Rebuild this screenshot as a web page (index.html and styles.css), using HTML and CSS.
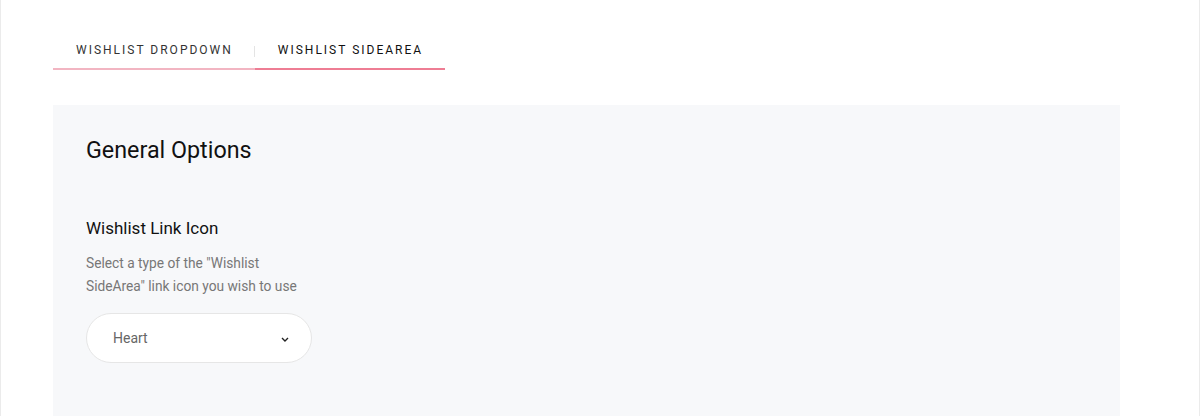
FILE: index.html
```html
<!DOCTYPE html>
<html lang="en">
<head>
  <meta charset="UTF-8" />
  <title>Wishlist Options</title>
  <link rel="stylesheet" href="styles.css">
</head>
<body>
  <div class="page">
    <div class="tabs">
      <a class="tab" href="#">Wishlist Dropdown</a>
      <a class="tab active" href="#">Wishlist SideArea</a>
    </div>

    <div class="panel">
      <h2 class="panel-title">General Options</h2>

      <div class="field">
        <h3 class="field-title">Wishlist Link Icon</h3>
        <p class="field-desc">Select a type of the "Wishlist SideArea" link icon you wish to use</p>
        <div class="select">
          <span>Heart</span>
          <svg class="chevron" width="8" height="5" viewBox="0 0 8 5">
            <path d="M1 1l3 3 3-3" fill="none" stroke="#222" stroke-width="1.4"/>
          </svg>
        </div>
      </div>
    </div>
  </div>
</body>
</html>
```

FILE: styles.css
```css
html, body {
  margin: 0;
  height: 100%;
}

body {
  font-family: Roboto, "Noto Sans", Arial, sans-serif;
  background: #fff;
  color: #111;
}

.page {
  box-sizing: border-box;
  height: 100%;
  border-left: 1px solid #ebebeb;
  border-right: 1px solid #ebebeb;
  padding: 42px 0 0 52px;
  overflow: hidden;
}

.tabs {
  display: flex;
  align-items: flex-end;
}

.tab {
  position: relative;
  display: block;
  padding: 0 22px 9px 23px;
  font-size: 12px;
  line-height: 17px;
  letter-spacing: 2px;
  text-transform: uppercase;
  text-decoration: none;
  color: #333;
  border-bottom: 2px solid #f2b5c2;
}

.tab + .tab::before {
  content: "";
  position: absolute;
  left: -1px;
  top: 4px;
  width: 1px;
  height: 11px;
  background: #e4e4e4;
}

.tab.active {
  color: #111;
  border-bottom-color: #ee7d94;
}

.panel {
  margin-top: 35px;
  width: 1067px;
  height: 400px;
  box-sizing: border-box;
  background: #f7f8fa;
  padding: 30px 33px;
}

.panel-title {
  margin: 0;
  font-size: 23.3px;
  line-height: 30px;
  font-weight: 400;
  color: #111;
}

.field {
  margin-top: 52px;
}

.field-title {
  margin: 0;
  font-size: 17px;
  line-height: 22px;
  font-weight: 400;
  color: #111;
}

.field-desc {
  margin: 13px 0 0;
  width: 220px;
  font-size: 13.75px;
  line-height: 23px;
  color: #777;
}

.select {
  margin-top: 15px;
  width: 226px;
  height: 50px;
  box-sizing: border-box;
  border: 1px solid #e6e6e6;
  border-radius: 25px;
  background: #fff;
  display: flex;
  align-items: center;
  justify-content: space-between;
  padding: 0 22px 0 26px;
  font-size: 14px;
  color: #666;
}

.chevron {
  display: block;
  margin-top: 2px;
}
```
